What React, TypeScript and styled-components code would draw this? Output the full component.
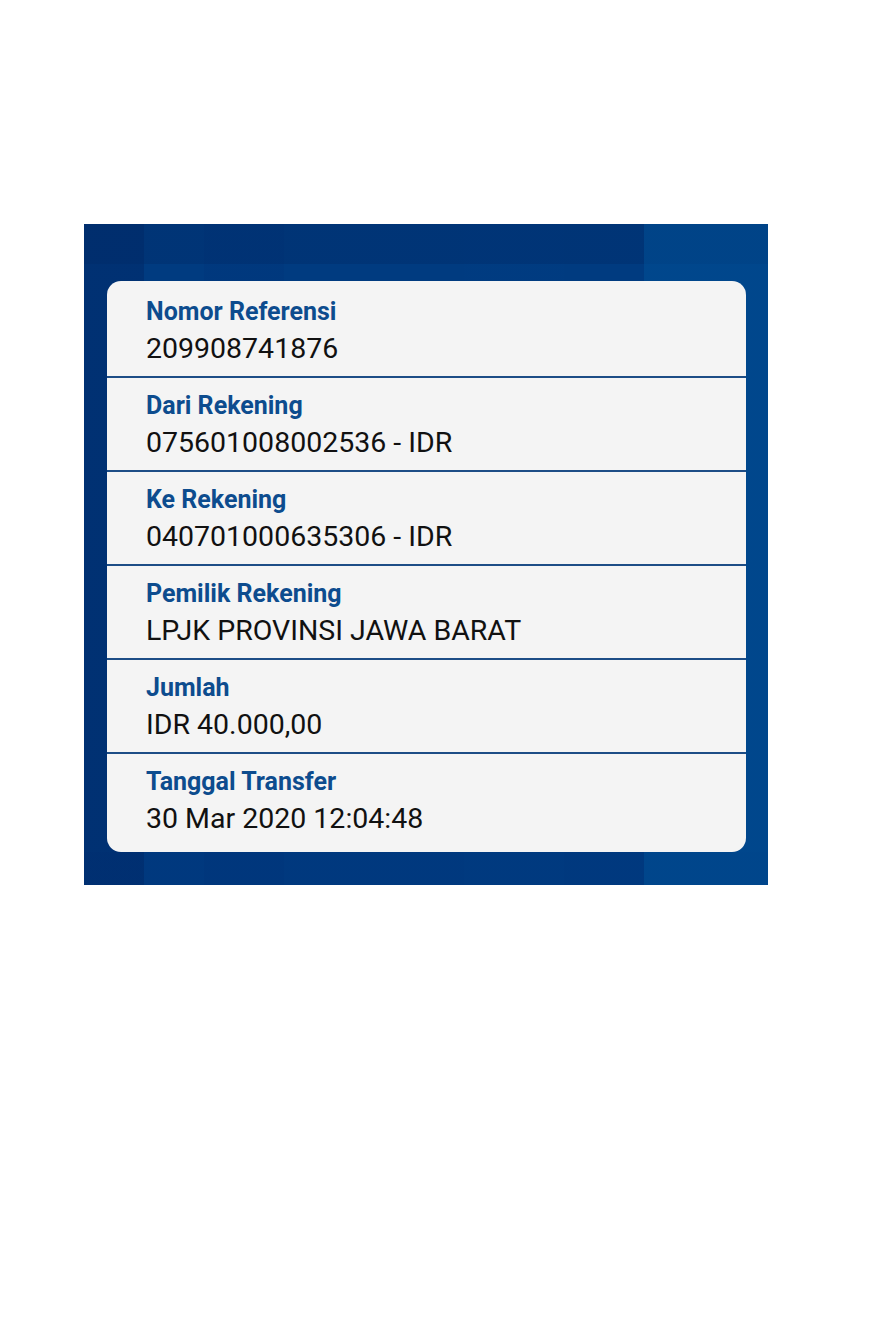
import React from "react";
import styled, { createGlobalStyle } from "styled-components";

const Global = createGlobalStyle`
  html, body { margin: 0; padding: 0; background: #ffffff; }
  body { font-family: Roboto, "Noto Sans", Arial, sans-serif; }
`;

const Page = styled.div`
  width: 880px;
  min-height: 1340px;
  padding: 224px 0 0 84px;
  box-sizing: border-box;
`;

const Panel = styled.div`
  width: 684px;
  height: 661px;
  box-sizing: border-box;
  padding: 57px 22px 0 23px;
  background-color: #003b80;
  background-image:
    linear-gradient(90deg, transparent 0, transparent 560px, rgba(0, 80, 150, 0.55) 560px),
    linear-gradient(180deg, rgba(0, 40, 100, 0.35) 0, rgba(0, 40, 100, 0.35) 40px, transparent 40px),
    linear-gradient(90deg, rgba(0, 30, 90, 0.35) 0, rgba(0, 30, 90, 0.35) 60px, transparent 60px, transparent 120px, rgba(0, 50, 120, 0.3) 120px, rgba(0, 50, 120, 0.3) 200px, transparent 200px, transparent 380px, rgba(0, 60, 130, 0.3) 380px, rgba(0, 60, 130, 0.3) 480px, transparent 480px),
    linear-gradient(180deg, transparent 0, transparent 628px, rgba(0, 55, 125, 0.6) 628px);
`;

const Card = styled.div`
  width: 639px;
  height: 571px;
  box-sizing: border-box;
  padding: 3px 0 4px;
  background: #f4f4f4;
  border-radius: 14px;
  display: flex;
  flex-direction: column;
  overflow: hidden;
`;

const Row = styled.div<{ $last?: boolean }>`
  height: ${(p) => (p.$last ? "auto" : "94px")};
  flex: ${(p) => (p.$last ? "1" : "0 0 auto")};
  box-sizing: border-box;
  padding: 13px 0 0 39px;
  border-bottom: ${(p) => (p.$last ? "none" : "2px solid #1d4d86")};
  display: flex;
  flex-direction: column;
  gap: 5px;
`;

const Label = styled.div`
  font-family: Roboto, "Noto Sans", Arial, sans-serif;
  font-weight: 700;
  font-size: 25px;
  line-height: 30px;
  color: #0d4c8e;
`;

const Value = styled.div`
  font-family: Roboto, "Noto Sans", Arial, sans-serif;
  font-weight: 400;
  font-size: 28.5px;
  line-height: 34px;
  color: #111111;
`;

const rows = [
  { label: "Nomor Referensi", value: "209908741876" },
  { label: "Dari Rekening", value: "075601008002536 - IDR" },
  { label: "Ke Rekening", value: "040701000635306 - IDR" },
  { label: "Pemilik Rekening", value: "LPJK PROVINSI JAWA BARAT" },
  { label: "Jumlah", value: "IDR 40.000,00" },
  { label: "Tanggal Transfer", value: "30 Mar 2020 12:04:48" },
];

export default function App() {
  return (
    <Page>
      <Global />
      <Panel>
        <Card>
          {rows.map((r, i) => (
            <Row key={r.label} $last={i === rows.length - 1}>
              <Label>{r.label}</Label>
              <Value>{r.value}</Value>
            </Row>
          ))}
        </Card>
      </Panel>
    </Page>
  );
}
